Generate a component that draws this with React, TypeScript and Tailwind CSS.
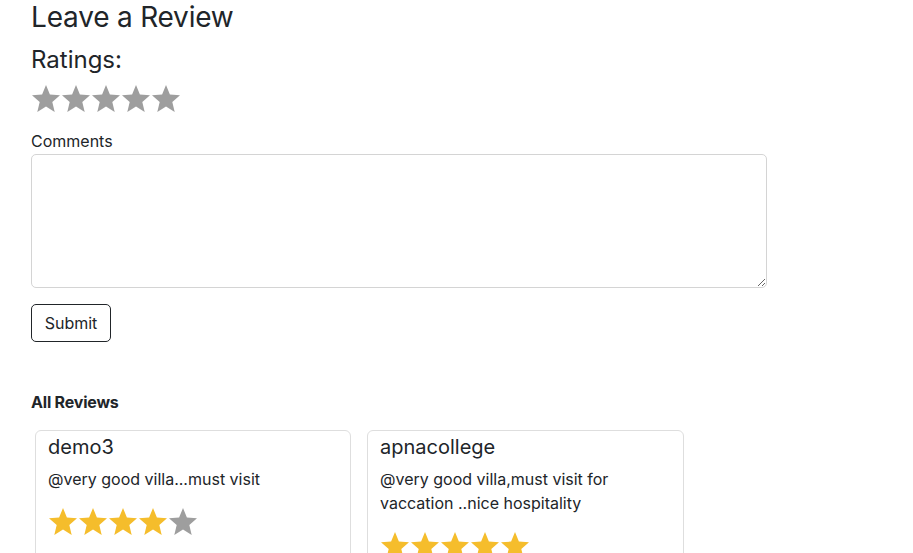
import React from "react";

const Star = ({ color }: { color: string }) => (
  <svg width="30" height="29" viewBox="0 0 30 29" className="block">
    <polygon
      points="15,1 18.9,10.6 29,11.3 21.3,17.9 23.7,28 15,22.5 6.3,28 8.7,17.9 1,11.3 11.1,10.6"
      fill={color}
    />
  </svg>
);

const Stars = ({ n, total = 5 }: { n: number; total?: number }) => (
  <div className="flex">
    {Array.from({ length: total }).map((_, i) => (
      <Star key={i} color={i < n ? "#f5bd2c" : "#9e9e9e"} />
    ))}
  </div>
);

export default function App() {
  return (
    <div
      className="bg-white text-[#212529] h-[553px] overflow-hidden"
      style={{ fontFamily: "Inter, 'Noto Sans', sans-serif" }}
    >
      <div className="pl-[31px]">
        <h3 className="text-[28px] leading-[1.2] tracking-[-0.2px] pt-[1px]">Leave a Review</h3>
        <h4 className="text-[24px] leading-[1.2] mt-[11px]">Ratings:</h4>
        <div className="mt-[10px]">
          <Stars n={0} />
        </div>
        <label className="block text-[16px] leading-[24px] mt-[16px]">Comments</label>
        <textarea className="block w-[736px] h-[134px] border border-[#d4d4d4] rounded-[5px] mt-[1px] resize-y" />
        <button className="mt-[16px] w-[80px] h-[38px] border border-[#212529] rounded-[5px] text-[16px]">
          Submit
        </button>
        <p className="font-bold text-[16px] leading-[24px] mt-[48px] tracking-[-0.2px]">All Reviews</p>
        <div className="flex gap-[16px] mt-[16px] pl-[4px]">
          <div className="w-[316px] h-[200px] border border-[#dedede] rounded-[6px] px-[12px] pt-[4px]">
            <h5 className="text-[20px] leading-[1.2]">demo3</h5>
            <p className="text-[16px] leading-[24px] mt-[8px]">@very good villa...must visit</p>
            <div className="mt-[16px]">
              <Stars n={4} />
            </div>
          </div>
          <div className="w-[317px] h-[200px] border border-[#dedede] rounded-[6px] px-[12px] pt-[4px]">
            <h5 className="text-[20px] leading-[1.2]">apnacollege</h5>
            <p className="text-[16px] leading-[24px] mt-[8px] w-[270px]">
              @very good villa,must visit for vaccation ..nice hospitality
            </p>
            <div className="mt-[16px]">
              <Stars n={5} />
            </div>
          </div>
        </div>
      </div>
    </div>
  );
}
